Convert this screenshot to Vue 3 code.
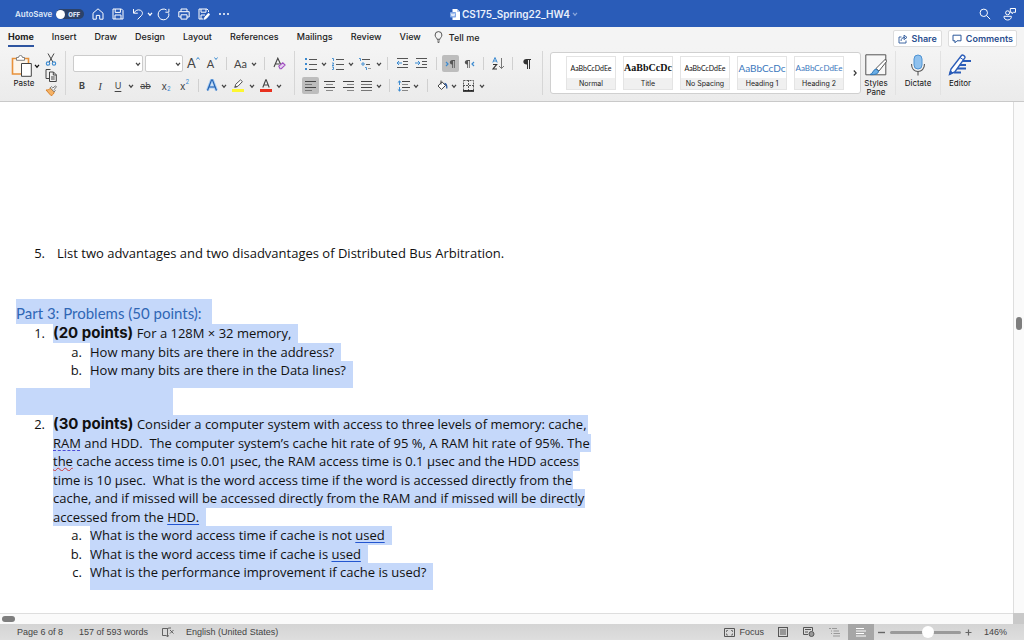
<script setup>
import { ref } from 'vue'

const tabs = ['Home', 'Insert', 'Draw', 'Design', 'Layout', 'References', 'Mailings', 'Review', 'View']
const activeTab = ref('Home')
const zoom = ref(54)

const styles = [
  { name: 'Normal', sample: 'AaBbCcDdEe', kind: 'body' },
  { name: 'Title', sample: 'AaBbCcDc', kind: 'title' },
  { name: 'No Spacing', sample: 'AaBbCcDdEe', kind: 'body' },
  { name: 'Heading 1', sample: 'AaBbCcDc', kind: 'h1' },
  { name: 'Heading 2', sample: 'AaBbCcDdEe', kind: 'h2' },
]
</script>

<template>
  <div class="word">
    <svg width="0" height="0" class="defs" aria-hidden="true">
      <symbol id="chev" viewBox="0 0 6 6"><path d="M1 1.800 3 4.200 5 1.800" fill="none" stroke="currentColor" stroke-width="1.200" /></symbol>
    </svg>

    <header class="titlebar">
      <div class="quick">
        <label class="autosave">AutoSave
          <span class="switch"><input type="checkbox" aria-label="AutoSave" /><i></i><b>OFF</b></span>
        </label>
        <button class="q" aria-label="Home"><svg width="12" height="12" viewBox="0 0 12 12"><path d="M1 5.200 6 .8l5 4.400v6H7.700V7.400H4.300v3.800H1z" /></svg></button>
        <button class="q" aria-label="Save"><svg width="12" height="12" viewBox="0 0 12 12"><path d="M1 1h8.500L11 2.500V11H1zM3.200 1v3.400h5.200V1M3 11V7h6v4" /></svg></button>
        <button class="q undo" aria-label="Undo"><svg width="12" height="12" viewBox="0 0 12 12"><path d="M1.500 1v4.200h4.300M1.800 5C3.500 2.200 6 1.300 8.300 2.200c2.600 1.200 2.700 3.800 1 5.500L5.600 11.400" /></svg></button>
        <button class="q qc" aria-label="Undo list"><svg width="6" height="6"><use href="#chev" /></svg></button>
        <button class="q redo" aria-label="Redo"><svg width="13" height="13" viewBox="0 0 13 13"><path d="M11.800 5.300A5.400 5.400 0 1 1 9.600 2M11.900.8v3.400H8.400" /></svg></button>
        <button class="q" aria-label="Print"><svg width="12" height="12" viewBox="0 0 12 12"><path d="M3 3.600V1h6v2.600M3 9H.8V3.700h10.400V9H9M3 6.800h6v4.300H3z" /></svg></button>
        <button class="q" aria-label="Save as"><svg width="12" height="12" viewBox="0 0 12 12"><path d="M5.500 11H1V1h8l1.500 1.500V4M3 1v3.200h5V1M3 11V7h4" /><path d="m6.300 11.300.7-2.300L10.500 5.200l1.200 1.200L8.200 10.500z" fill="#fff" /></svg></button>
        <button class="q" aria-label="More"><svg width="12" height="12" viewBox="0 0 12 12"><g fill="#fff" stroke="none"><circle cx="2" cy="6" r="1" /><circle cx="6" cy="6" r="1" /><circle cx="10" cy="6" r="1" /></g></svg></button>
      </div>
      <div class="docname">
        <svg width="10" height="11" viewBox="0 0 10 11"><path d="M2.500 0H7l3 3v8H2.500z" fill="#fff" /><path d="M7 0v3h3" fill="#b9cdf0" /><rect y="3" width="6" height="5.500" rx=".8" fill="#7fa6e6" /><path d="m1.200 4.400.9 2.800.9-2.600.9 2.600.9-2.800" fill="none" stroke="#fff" stroke-width=".8" /></svg>
        <span>CS175_Spring22_HW4</span>
        <svg width="6" height="6" class="faint"><use href="#chev" /></svg>
      </div>
      <div class="tools">
        <button class="q" aria-label="Search"><svg width="12" height="12" viewBox="0 0 12 12"><circle cx="4.800" cy="4.800" r="3.700" /><path d="m7.600 7.600 3.600 3.600" /></svg></button>
        <button class="q" aria-label="Share activity"><svg width="14" height="14" viewBox="0 0 14 14"><circle cx="4.600" cy="5.800" r="2" /><path d="M1 9.300h7.300c.4 2-1.300 3.700-3.600 3.700S.8 11.500 1 9.300zM7.300 1.500h5.200v3.800h-2L9 6.700V5.300H7.300z" /></svg></button>
      </div>
    </header>

    <nav class="tabs">
      <button v-for="t in tabs" :key="t" class="tab" :class="{ on: t === activeTab }" @click="activeTab = t">{{ t }}</button>
      <button class="tell"><svg width="9" height="12" viewBox="0 0 9 12"><path d="M3 8.300C3 6.800 1.100 6.200 1.100 4a3.400 3.400 0 0 1 6.800 0C7.900 6.200 6 6.800 6 8.300zM3.200 10h2.600M3.700 11.400h1.600" fill="none" stroke="#444" stroke-width=".9" /></svg>Tell me</button>
      <span class="spacer"></span>
      <button class="pill"><svg width="10" height="10" viewBox="0 0 10 10"><path d="M3.500 3H1v6h7V6.500M3 7c.2-2.500 1.500-3.600 4-3.600M6 1.200l3 2.200-3 2.200z" fill="none" stroke="#2b579a" stroke-width=".9" /></svg>Share</button>
      <button class="pill"><svg width="10" height="10" viewBox="0 0 10 10"><path d="M1 1.200h8v5.600H5L3 8.800v-2H1z" fill="none" stroke="#2b579a" /></svg>Comments</button>
    </nav>

    <section class="ribbon" aria-label="Home ribbon">
      <div class="clip">
        <button class="paste">
          <span>
            <svg width="22" height="24" viewBox="0 0 22 24"><path d="M1.500 4.500h16V20h-16z" fill="#fdf6ec" stroke="#e8913a" stroke-width="1.600" /><path d="M5.500 6.300V3.500h2a2 2 0 0 1 4 0h2v2.800z" fill="#fff" stroke="#777" stroke-width=".9" /><path d="M10.500 9.500h9.800v12.800h-9.800z" fill="#fff" stroke="#444" /></svg>
            <svg width="6" height="6"><use href="#chev" /></svg>
          </span>
          Paste
        </button>
        <div class="clipcol">
          <button aria-label="Cut"><svg width="12" height="13" viewBox="0 0 12 13"><path d="M3 .5 7.800 9M9 .5 4.200 9" fill="none" stroke="#444" stroke-width="1" /><g fill="none" stroke="#3b8ad0" stroke-width="1.100"><circle cx="3" cy="10.600" r="1.700" /><circle cx="9" cy="10.600" r="1.700" /></g></svg></button>
          <button aria-label="Copy"><svg width="12" height="13" viewBox="0 0 12 13"><path d="M4 9.500H1v-9h4.500M4.500 3h4l2.800 2.800v6.700H4.500zM8.300 3v3h3M6 8h3.700M6 10h3.700" fill="none" stroke="#444" /></svg></button>
          <button aria-label="Format painter"><svg width="12" height="12" viewBox="0 0 12 12"><path d="m1 5 5 5.600c2-.6 3-2 3.200-4L5.500 3C4.200 4.500 3 5 1 5z" fill="#f4b266" stroke="#d9822b" /><path d="m5.200 2.800 4 4 1-1.200-1-1.200 2.200-2.600L10.600.9 7.800 3 6.400 1.700z" fill="#fff" stroke="#555" stroke-width=".8" /></svg></button>
        </div>
      </div>
      <i class="vline"></i>

      <div class="rows fontg">
        <div class="row f1">
          <span class="sel"><select aria-label="Font"><option></option></select><svg width="6" height="6"><use href="#chev" /></svg></span>
          <i></i>
          <span class="sel"><select aria-label="Font size"><option></option></select><svg width="6" height="6"><use href="#chev" /></svg></span>
          <button aria-label="Grow font" class="ga"><span>A</span><svg width="4" height="3" viewBox="0 0 4 3"><path d="m.5 2.500 1.500-2 1.500 2" fill="none" stroke="#3b8ad0" /></svg></button>
          <button aria-label="Shrink font" class="ga small"><span>A</span><svg width="4" height="3" viewBox="0 0 4 3"><path d="m.5.5 1.500 2 1.500-2" fill="none" stroke="#3b8ad0" /></svg></button>
          <i class="d"></i>
          <button class="aa">Aa</button>
          <button aria-label="Case options"><svg width="6" height="6"><use href="#chev" /></svg></button>
          <i class="d"></i>
          <button aria-label="Clear formatting"><svg width="13" height="13" viewBox="0 0 13 13"><path d="M1 10 4.800 1.200 7.500 7M2.500 7h4" fill="none" stroke="#444" stroke-width="1.100" /><path d="m5.800 9.200 4-3.400 2.300 2.300-3.800 3.600H7z" fill="#e7d2f2" stroke="#a04fc0" stroke-width="1.100" /></svg></button>
        </div>
        <div class="row f2">
          <button class="bold">B</button>
          <button class="ital">I</button>
          <button class="und">U</button>
          <button aria-label="Underline options"><svg width="6" height="6"><use href="#chev" /></svg></button>
          <button class="strike">ab</button>
          <button class="ss">x<sub>2</sub></button>
          <button class="ss">x<sup>2</sup></button>
          <i class="d"></i>
          <button aria-label="Text effects"><svg width="12" height="13" viewBox="0 0 12 13"><path d="M1.500 11.500 5.500 1h1l4 10.500M3.300 8h5.400" fill="none" stroke="#a5cbf4" stroke-width="3" /><path d="M1.500 11.500 5.500 1h1l4 10.500M3.300 8h5.400" fill="none" stroke="#215fae" stroke-width="1.100" /></svg></button>
          <button aria-label="Effect options"><svg width="6" height="6"><use href="#chev" /></svg></button>
          <button aria-label="Highlight"><svg width="12" height="13" viewBox="0 0 12 13"><path d="m3 8 .7-2.700L8.500.9l1.900 1.700L6 7.200z" fill="#fff" stroke="#555" /><path d="m1.800 8.800 1.700-2 1.800 1.500z" fill="#555" /><path d="M0 10h12v3H0z" fill="#fdf731" /></svg></button>
          <button aria-label="Highlight colors"><svg width="6" height="6"><use href="#chev" /></svg></button>
          <button aria-label="Font color"><svg width="12" height="13" viewBox="0 0 12 13"><path d="M2.800 8.500 5.800.8h.4l3 7.700M3.800 6h4.400" fill="none" stroke="#444" stroke-width="1.100" /><path d="M0 10h12v3H0z" fill="#e8311f" /></svg></button>
          <button aria-label="Font colors"><svg width="6" height="6"><use href="#chev" /></svg></button>
        </div>
      </div>
      <i class="vline"></i>

      <div class="rows parag">
        <div class="row p1">
          <button aria-label="Bullets"><svg width="12" height="12" viewBox="0 0 12 12"><g fill="#3b8ad0"><path d="M0 0h2v2H0zM0 5h2v2H0zM0 10h2v2H0z" /></g><path d="M4 1.500h8M4 6.500h8M4 11.500h8" stroke="#555" /></svg></button>
          <button aria-label="Bullet options"><svg width="6" height="6"><use href="#chev" /></svg></button>
          <button aria-label="Numbering"><svg width="12" height="12" viewBox="0 0 12 12"><path d="M0 .5h1.500V3M0 5h1.500v1L0 7.500h2M0 9h1.500v2.500H0" fill="none" stroke="#3b8ad0" stroke-width=".9" /><path d="M4 1.500h8M4 6.500h8M4 11.500h8" stroke="#555" /></svg></button>
          <button aria-label="Numbering options"><svg width="6" height="6"><use href="#chev" /></svg></button>
          <button aria-label="Multilevel list"><svg width="12" height="12" viewBox="0 0 12 12"><path d="M0 .5h1.500V3M3 5h2v2H3zM6 9.500h1.500V12" fill="none" stroke="#3b8ad0" stroke-width=".9" /><path d="M3 1.500h8M7 6.500h4" stroke="#555" /><path d="M9 10.500h3" stroke="#999" /></svg></button>
          <button aria-label="Multilevel options"><svg width="6" height="6"><use href="#chev" /></svg></button>
          <i class="d"></i>
          <button aria-label="Decrease indent"><svg width="12" height="11" viewBox="0 0 12 11"><path d="M1 .5h11M7 3.500h5M7 6.500h5M1 9.500h11" stroke="#555" /><path d="M6 5H1m2-2L1 5l2 2" fill="none" stroke="#3b8ad0" /></svg></button>
          <button aria-label="Increase indent"><svg width="12" height="11" viewBox="0 0 12 11"><path d="M1 .5h11M7 3.500h5M7 6.500h5M1 9.500h11" stroke="#555" /><path d="M0 5h5M3 3l2 2-2 2" fill="none" stroke="#3b8ad0" /></svg></button>
          <i class="d"></i>
          <button class="on" aria-label="Left to right"><svg width="11" height="8" viewBox="0 0 11 8"><path d="m1 2 2 2-2 2" fill="none" stroke="#3b8ad0" stroke-width="1.200" /><path d="M7.500 0H10v1h-.3v7h-.8V1H8v7h-.8V4.500C4 4.500 4 0 7.500 0z" fill="#555" /></svg></button>
          <button aria-label="Right to left"><svg width="11" height="8" viewBox="0 0 11 8"><path d="m10 2-2 2 2 2" fill="none" stroke="#3b8ad0" stroke-width="1.200" /><path d="M3.500 0H6v1h-.3v7h-.8V1H4v7h-.8V4.500C0 4.500 0 0 3.500 0z" fill="#555" /></svg></button>
          <i class="d"></i>
          <button aria-label="Sort"><svg width="13" height="13" viewBox="0 0 13 13"><path d="M.8 5.500 3 .5l2.200 5M1.500 4h3" fill="none" stroke="#3b8ad0" /><path d="M1 7.500h3.600L1 12h4" fill="none" stroke="#333" stroke-width="1.200" /><path d="M9.500 1v10.500M7 9l2.500 2.500L12 9" fill="none" stroke="#777" /></svg></button>
          <i class="d"></i>
          <button aria-label="Show marks"><svg width="8" height="10" viewBox="0 0 8 10"><path d="M3.500 0H8v1H7v9H6V1H5v9H4V5.500C-.8 5.500-.8 0 3.500 0z" fill="#333" /></svg></button>
        </div>
        <div class="row p2">
          <button class="on" aria-label="Align left"><svg width="11" height="10" viewBox="0 0 11 10"><path d="M0 .5h11M0 6.500h11" stroke="#444" /><path d="M0 3.500h7M0 9.500h7" stroke="#777" /></svg></button>
          <button aria-label="Align center"><svg width="11" height="10" viewBox="0 0 11 10"><path d="M0 .5h11M0 6.500h11" stroke="#444" /><path d="M2 3.500h7M2 9.500h7" stroke="#888" /></svg></button>
          <button aria-label="Align right"><svg width="11" height="10" viewBox="0 0 11 10"><path d="M0 .5h11M0 6.500h11" stroke="#444" /><path d="M4 3.500h7M4 9.500h7" stroke="#888" /></svg></button>
          <button aria-label="Justify"><svg width="11" height="10" viewBox="0 0 11 10"><path d="M0 .5h11M0 6.500h11" stroke="#444" /><path d="M0 3.500h11M0 9.500h11" stroke="#777" /></svg></button>
          <button aria-label="Justify options"><svg width="6" height="6"><use href="#chev" /></svg></button>
          <i class="d"></i>
          <button aria-label="Line spacing"><svg width="13" height="12" viewBox="0 0 13 12"><path d="M2.500 1v4M2.500 7v4M.8 2.600 2.500 1l1.700 1.600M.8 9.400 2.500 11l1.700-1.600" fill="none" stroke="#3b8ad0" /><path d="M5 1.500h8M5 7.500h8" stroke="#444" /><path d="M5 4.500h6M5 10.500h6" stroke="#888" /></svg></button>
          <button aria-label="Spacing options"><svg width="6" height="6"><use href="#chev" /></svg></button>
          <i class="d"></i>
          <button aria-label="Shading"><svg width="11" height="11" viewBox="0 0 11 11"><path d="M1 6 5 1.800l3.500 3.700L4.500 9.400z" fill="#fff" stroke="#444" /><path d="M4 .5v4" stroke="#444" /><path d="M7.500 3.500c2 .3 2.500 2 2.300 5" fill="none" stroke="#2b579a" stroke-width="1.300" /></svg></button>
          <button aria-label="Shading options"><svg width="6" height="6"><use href="#chev" /></svg></button>
          <button aria-label="Borders"><svg width="11" height="12" viewBox="0 0 11 12"><path d="M.5.500h10v10H.5zM5.500 0v10M0 5.500h11" fill="none" stroke="#555" stroke-dasharray="2 1" /><path d="M0 11h11" stroke="#111" stroke-width="1.500" /></svg></button>
          <button aria-label="Border options"><svg width="6" height="6"><use href="#chev" /></svg></button>
        </div>
      </div>
      <i class="vline"></i>

      <div class="gallery">
        <button v-for="s in styles" :key="s.name" class="card">
          <span class="sample" :class="s.kind">{{ s.sample }}</span>
          <span class="cap">{{ s.name }}</span>
        </button>
        <button class="more" aria-label="More styles"><svg width="6" height="8" viewBox="0 0 6 8"><path d="m1.800 1.500 2.400 2.500-2.400 2.500" fill="none" stroke="#333" stroke-width="1.100" /></svg></button>
      </div>

      <button class="big pane">
        <svg width="22" height="22" viewBox="0 0 22 22"><path d="M.8.800h20v20H.8z" fill="#f7f7f7" stroke="#555" /><path d="m11 14.500 9.500-9.500 1 2.500-7.500 9.500z" fill="#fff" stroke="#555" /><path d="M5 20.500c3-.5 2.500-4.500 6-5.500l2.500 2c0 3-3.500 4-8.500 3.500z" fill="#6aaee6" stroke="#2d76b8" /></svg>
        Styles<br />Pane
      </button>
      <i class="vline soft"></i>
      <button class="big dict">
        <svg width="16" height="22" viewBox="0 0 16 22"><rect x="4" y="1" width="8" height="14" rx="4" fill="#8fc1ee" stroke="#4f93d2" /><path d="M1.500 10c0 5 3 7.500 6.500 7.500s6.500-2.500 6.500-7.500M8 17.500V21.500" fill="none" stroke="#555" stroke-width="1.100" /></svg>
        Dictate
      </button>
      <i class="vline soft"></i>
      <button class="big edit">
        <svg width="24" height="22" viewBox="0 0 24 22"><path d="M13 7h10M11 11h7M9 14.500h9M6 18.500h7" stroke="#2a5cb8" stroke-width="2.200" /><path d="M1.500 20.500 3 15 13.500 1.500c1-1.200 4.200.8 3.300 2.400L6.800 18z" fill="#fff" stroke="#2a5cb8" stroke-width="1.400" /><path d="m1.500 20.500 1-3.500 2.200 1.700zM12 3.500l3.500 2.300" fill="#2a5cb8" stroke="#2a5cb8" /></svg>
        Editor
      </button>
    </section>

    <main class="work">
      <article class="doc">
        <ol class="plain first">
          <li><span class="num">5.</span><p>List two advantages and two disadvantages of Distributed Bus Arbitration.</p></li>
        </ol>
        <h2><mark>Part 3: Problems (50 points):</mark></h2>
        <ol class="list">
          <li class="ln"><span class="num">1.</span><mark><b>(20 points)</b> For a 128M × 32 memory,</mark></li>
          <li class="ln sub"><span class="num">a.</span><mark>How many bits are there in the address?</mark></li>
          <li class="ln sub last"><span class="num">b.</span><mark>How many bits are there in the Data lines?</mark></li>
        </ol>
        <mark class="blank"></mark>
        <ol class="list">
          <li class="ln"><span class="num">2.</span><mark class="wrap"><b>(30 points)</b> Consider a computer system with access to three levels of memory: cache,</mark></li>
          <li class="ln"><span></span><mark class="wrap"><span class="dash">RAM</span> and HDD.&nbsp; The computer system’s cache hit rate of 95 %, A RAM hit rate of 95%. The</mark></li>
          <li class="ln"><span></span><mark class="wrap"><span class="wavy">the</span> cache access time is 0.01 µsec, the RAM access time is 0.1 µsec and the HDD access</mark></li>
          <li class="ln"><span></span><mark class="wrap">time is 10 µsec.&nbsp; What is the word access time if the word is accessed directly from the</mark></li>
          <li class="ln"><span></span><mark class="wrap">cache, and if missed will be accessed directly from the RAM and if missed will be directly</mark></li>
          <li class="ln"><span></span><mark>accessed from the <u>HDD.</u></mark></li>
          <li class="ln sub"><span class="num">a.</span><mark>What is the word access time if cache is not <u>used</u></mark></li>
          <li class="ln sub"><span class="num">b.</span><mark>What is the word access time if cache is <u>used</u></mark></li>
          <li class="ln sub last"><span class="num">c.</span><mark>What is the performance improvement if cache is used?</mark></li>
        </ol>
      </article>
      <div class="vbar"><i></i></div>
      <div class="hbar"><i></i></div>
      <div class="corner"></div>
    </main>

    <footer class="status">
      <span class="s1">Page 6 of 8</span>
      <span class="s2">157 of 593 words</span>
      <button class="proof" aria-label="Proofing"><svg width="12" height="10" viewBox="0 0 12 10"><path d="M5.500 1.500H.5v7h3.500l1.500 1 1.500-1M5.500 1.500v8M5.500 1.500 7 1h2M8 3l3.500 3.500M11.500 3 8 6.500" fill="none" stroke="#555" stroke-width=".9" /></svg></button>
      <span>English (United States)</span>
      <span class="spacer"></span>
      <button class="focus"><svg width="11" height="9" viewBox="0 0 11 9"><path d="M.5.500h10v8H.5z" fill="none" stroke="#555" /><path d="M2.500 4V2.500H4M7 2.500h1.500V4M8.500 5.500V7H7M4 7H2.500V5.500" fill="none" stroke="#777" /></svg>Focus</button>
      <button class="v" aria-label="Print layout"><svg width="10" height="10" viewBox="0 0 10 10"><path d="M.5.500h9v9h-9zM2 3h6M2 5h6M2 7h6" fill="none" stroke="#555" stroke-width="1.100" /></svg></button>
      <button class="v" aria-label="Web layout"><svg width="12" height="10" viewBox="0 0 12 10"><path d="M9.500 4V.500h-9v7H5M2 2.500h6M2 5h3" fill="none" stroke="#555" /><circle cx="8.500" cy="7" r="2.500" fill="#999" stroke="#555" /></svg></button>
      <button class="v" aria-label="Outline"><svg width="11" height="9" viewBox="0 0 11 9"><path d="M0 .5h2M3 .5h5M2 3h1M4.500 3H10M2 5.500h1M4.500 5.500H11M4 8h7" stroke="#999" /></svg></button>
      <button class="v on" aria-label="Draft"><svg width="10" height="9" viewBox="0 0 10 9"><path d="M0 .5h8M0 3h10M0 5.500h8M0 8h10" stroke="#fff" /></svg></button>
      <button class="pm" aria-label="Zoom out"><svg width="7" height="7"><path d="M0 3.500h7" stroke="#666" stroke-width="1.400" /></svg></button>
      <input v-model="zoom" class="slider" type="range" min="0" max="100" aria-label="Zoom" />
      <button class="pm" aria-label="Zoom in"><svg width="7" height="7"><path d="M.5 3.500h6M3.500.5v6" stroke="#666" stroke-width="1.200" /></svg></button>
      <span class="pct">146%</span>
    </footer>
  </div>
</template>

<style>
body { margin: 0; }
</style>

<style scoped>
.word { height: 100vh; display: flex; flex-direction: column; font-family: Inter, "Liberation Sans", sans-serif; font-size: 9px; color: #333; background: #fff; overflow: hidden; }
.defs { position: absolute; }
button { border: 0; padding: 0; margin: 0; background: none; font: inherit; color: inherit; display: flex; align-items: center; justify-content: center; }
svg { display: block; flex: none; }
.spacer { flex: 1; }

.titlebar { flex: none; height: 27px; background: #2a5cb8; color: #fff; display: grid; grid-template-columns: 1fr auto 1fr; align-items: center; padding: 0 7px 0 15px; }
.titlebar > * { margin-top: 1px; }
.quick { display: flex; align-items: center; gap: 8px; }
.q svg { fill: none; stroke: #fff; stroke-width: 1; color: #fff; }
.undo { margin-right: -5px; }
.qc { margin-right: -4px; }
.autosave { display: flex; align-items: center; gap: 4px; font-size: 8px; font-weight: 600; color: #dfe8f7; }
.switch { width: 28px; height: 10px; border-radius: 5px; background: #2c4269; display: flex; align-items: center; position: relative; }
.switch input { position: absolute; inset: 0; margin: 0; opacity: 0; }
.switch i { width: 9px; height: 9px; border-radius: 50%; background: #fff; }
.switch b { font-size: 6px; margin-left: 3px; color: #d5deee; }
.docname { display: flex; align-items: center; gap: 2px; margin-right: 4px; font-size: 10px; font-weight: 600; color: #e8effb; }
.faint { opacity: .5; }
.tools { display: flex; justify-content: flex-end; gap: 12px; }

.tabs { flex: none; height: 21px; display: flex; align-items: stretch; background: #f4f4f4; padding: 0 7px 0 8px; gap: 18px; font-size: 9px; font-weight: 500; color: #222; }
.tab { border-bottom: 2px solid transparent; margin-bottom: 1px; }
.tab.on { font-weight: 700; border-color: #2f55a0; }
.tell { gap: 6px; margin-left: -5px; padding-bottom: 1px; }
.pill { margin: 3px 0 1px; border: 1px solid #ddd; border-radius: 2px; background: #fff; color: #2b4f8f; font-weight: 600; gap: 4px; padding: 0 4px; }
.pill + .pill { margin-left: -12px; padding: 0 3px; }

.ribbon { flex: none; height: 53px; box-sizing: content-box; border-bottom: 1px solid #c9c9c9; background: linear-gradient(#f4f4f4, #ebebeb); display: flex; align-items: flex-start; color: #444; }
.vline { flex: none; width: 1px; height: 44px; margin-top: 3px; background: #d6d6d6; }
.vline.soft { background: #e2e2e2; }
.clip { display: flex; width: 65px; flex: none; }
.paste { flex-direction: column; justify-content: flex-start; width: 43px; font-size: 8px; color: #111; padding: 6px 0 0 5px; box-sizing: border-box; }
.paste > span { display: flex; align-items: center; gap: 1px; margin-left: 3px; }
.clipcol { display: flex; flex-direction: column; gap: 3px; padding: 5px 0 0 2px; }
.rows { flex: none; display: flex; flex-direction: column; gap: 5px; padding-top: 7px; }
.fontg { width: 221px; padding-left: 7px; }
.parag { width: 240px; padding-left: 7px; }
.row { display: grid; height: 17px; }
.row > * { display: flex; align-items: center; justify-content: center; }
.row .d::before { content: ""; width: 1px; height: 13px; background: #d0d0d0; }
.on { background: #bdbdbd; border-radius: 2px; }
.tab.on { background: none; border-radius: 0; }
.f1 { grid-template-columns: 70px 2px 38px 21px 17px 10px 19px 8px 12px 18px; }
.f2 { grid-template-columns: 18px 18px 18px 8px 21px 20px 17px 10px 17px 8px 20px 8px 19px 8px; }
.p1 { grid-template-columns: 18px 8px 19px 8px 20px 8px 9px 20px 18px 12px 17px 20px 9px 20px 9px 20px; }
.p2 { grid-template-columns: 17px 20px 18px 18px 8px 12px 17px 8px 14px 16px 8px 20px 8px; }
.row .sel { display: grid; grid-template-columns: 1fr 8px; }
.sel select { grid-area: 1 / 1 / 2 / 3; width: 100%; height: 17px; appearance: none; border: 1px solid #ccc; border-radius: 2px; background: #fff; padding: 0; }
.sel svg { grid-area: 1 / 2; pointer-events: none; }
.ga { font-family: Lato, sans-serif; font-size: 13px; line-height: 13px; }
.ga.small { font-size: 11px; }
.ga svg { align-self: flex-start; margin-top: 2px; }
.aa { font-family: Lato, sans-serif; font-size: 11px; }
.bold { font-weight: 700; font-size: 9px; }
.ital { font-family: "Liberation Serif", serif; font-style: italic; font-size: 11px; }
.und { text-decoration: underline; font-size: 9px; text-underline-offset: 2px; }
.strike { text-decoration: line-through; font-size: 9px; }
.ss { font-size: 10px; line-height: 10px; }
.ss sub, .ss sup { font-size: 6px; line-height: 6px; color: #3b8ad0; }
.ss sub { align-self: flex-end; margin-bottom: 2px; }
.ss sup { align-self: flex-start; margin-top: 2px; }

.gallery { flex: none; display: flex; align-items: stretch; gap: 7px; margin: 4px 0 0 7px; height: 42px; box-sizing: border-box; border: 1px solid #d0d0d0; border-radius: 3px; background: #fff; padding: 3px 1px 3px 15px; }
.card { width: 50px; box-sizing: border-box; flex-direction: column; align-items: stretch; border: 1px solid #e4e4e4; background: #fff; }
.sample { flex: 1; display: flex; align-items: center; justify-content: center; color: #111; font-family: Lato, sans-serif; white-space: nowrap; }
.body { font-size: 7px; }
.title { font-family: "Liberation Serif", serif; font-weight: 700; font-size: 10px; }
.h1 { font-size: 10px; color: #3b78bd; }
.h2 { font-size: 8px; color: #3b78bd; }
.cap { background: #f0f0f0; font-size: 7px; line-height: 11px; color: #222; }
.more { width: 8px; }
.big { flex: none; flex-direction: column; font-size: 8px; line-height: 9px; color: #111; padding-top: 6px; }
.big svg { margin-bottom: 3px; }
.pane { width: 30px; margin-right: 4px; }
.dict { width: 44px; }
.edit { width: 38px; }

.work { flex: 1; min-height: 0; display: grid; grid-template-columns: 1fr 11px; grid-template-rows: 1fr 11px; }
.doc { overflow: hidden; font-family: "Open Sans", "Noto Sans", sans-serif; font-size: 13px; line-height: 19px; color: #111; padding: 142px 0 0 16px; white-space: nowrap; }
ol, p, h2 { margin: 0; padding: 0; list-style: none; }
mark { display: block; width: fit-content; background: #c5d8fa; color: inherit; padding-right: 7px; }
mark.wrap { padding-right: 1px; }
.first li { display: grid; grid-template-columns: 41px 1fr; }
.num { text-align: right; padding-right: 8px; }
.first .num { padding-right: 12px; }
h2 { margin-top: 36px; font-family: Lato, sans-serif; font-size: 15px; line-height: 25px; height: 25px; font-weight: 400; color: #2f66b5; }
h2 mark { padding: 2px 10px 0 0; height: 23px; }
.ln { display: grid; grid-template-columns: 37px 1fr; height: 19px; line-height: 18px; }
.ln:nth-child(even) { height: 18px; }
.ln.sub { grid-template-columns: 74px 1fr; }
.ln.sub.last { height: 27px; }
.ln mark b { font-family: Inter, sans-serif; font-size: 15px; font-weight: 700; line-height: 18px; }
.blank { width: 157px; height: 27px; padding: 0; }
.dash { text-decoration: underline dashed #4c4cd8 1px; text-underline-offset: 2px; }
.wavy { text-decoration: underline wavy #c33 1px; text-underline-offset: 1px; }
u { text-decoration: underline #2456d0 1px; text-underline-offset: 2px; }
.vbar { border-left: 1px solid #dedede; background: #fafafa; display: flex; justify-content: center; padding-top: 215px; }
.vbar i { width: 6px; height: 13px; border-radius: 3px; background: #7e7e7e; }
.hbar { border-top: 1px solid #dedede; background: #fafafa; padding: 2px 2px 0; }
.hbar i { display: block; width: 13px; height: 6px; border-radius: 3px; background: #7e7e7e; }
.corner { background: #c9c9c9; }

.status { flex: none; height: 16px; display: flex; align-items: center; background: linear-gradient(#d4d4d4, #dedede); color: #444; padding: 0 17px; font-family: "Liberation Sans", sans-serif; font-size: 9px; }
.s1 { margin-right: 16px; }
.s2 { margin-right: 14px; }
.proof { margin-right: 12px; }
.focus { gap: 4px; margin-right: 6px; }
.v { width: 26px; height: 16px; }
.v.on { background: #a6a6a6; border-radius: 0; }
.pm { margin: 0 5px 0 4px; }
.slider { appearance: none; width: 71px; height: 3px; margin: 0; background: #9a9a9a; border-radius: 2px; }
.slider::-webkit-slider-thumb { appearance: none; width: 12px; height: 12px; border-radius: 50%; background: #fff; }
.pct { margin-left: 7px; }
</style>
